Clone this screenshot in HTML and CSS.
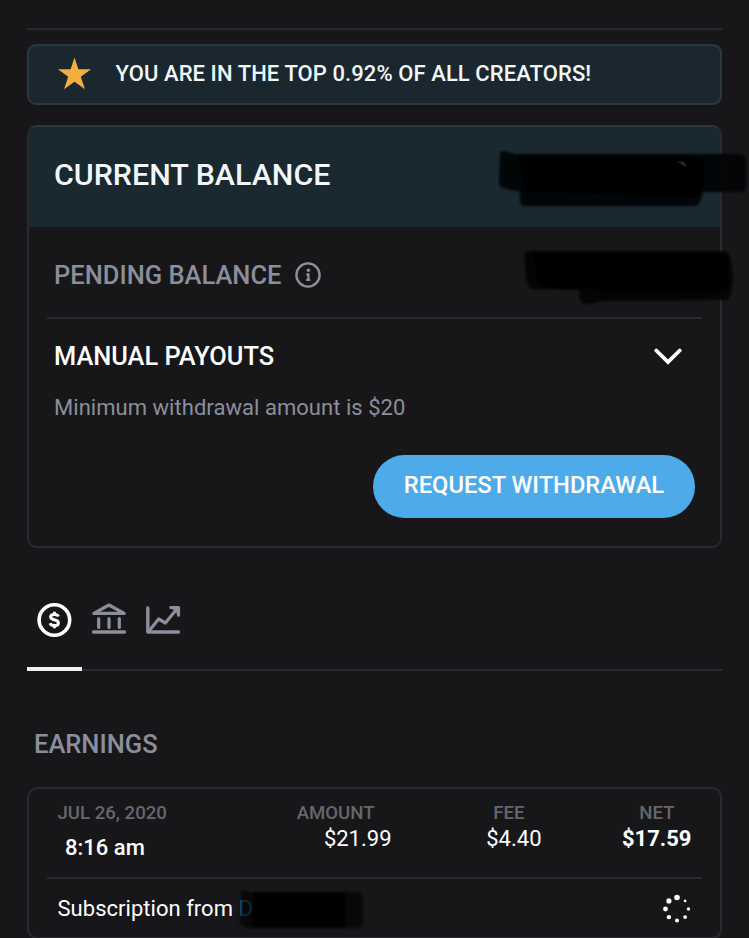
FILE: index.html
```html
<!DOCTYPE html>
<html lang="en">
<head>
    <meta charset="UTF-8">
    <meta name="viewport" content="width=device-width, initial-scale=1.0">
    <title>Earnings</title>
    <link rel="stylesheet" href="styles.css">
</head>
<body>
    <div class="page">
        <div class="banner">
            <svg class="star" viewBox="0 0 34 34" width="34" height="34">
                <path d="M17.500 .5 L21.400 12.300 H34 L23.800 19.800 L28 32.300 L17.500 24.800 L7 32.300 L11.200 19.800 L1 12.300 H13.600 Z" fill="#f3ae3d"/>
            </svg>
            <span class="banner-text">YOU ARE IN THE TOP 0.92% OF ALL CREATORS!</span>
        </div>

        <div class="card balance">
            <div class="current"><span>CURRENT BALANCE</span></div>
            <div class="balance-body">
                <div class="pending">
                    <span>PENDING BALANCE</span>
                    <svg viewBox="0 0 26 26" width="26" height="26" fill="none" stroke="#8a8f9b">
                        <circle cx="13" cy="13" r="11.600" stroke-width="2.400"/>
                        <circle cx="13.400" cy="8.200" r="1.700" fill="#8a8f9b" stroke="none"/>
                        <path d="M11.300 12.300 H13.400 V17.800 M11.200 17.800 H15.200" stroke-width="2.200"/>
                    </svg>
                </div>
                <div class="payouts">
                    <span>MANUAL PAYOUTS</span>
                    <svg viewBox="0 0 28 18" width="28" height="18" fill="none" stroke="#fff">
                        <path d="M2.300 3.500 L14 15 L25.700 3.500" stroke-width="3.800" stroke-linecap="round"/>
                    </svg>
                </div>
                <div class="minimum">Minimum withdrawal amount is $20</div>
                <button class="withdraw"><span>REQUEST WITHDRAWAL</span></button>
            </div>
        </div>

        <div class="tabs">
            <div class="tab active">
                <svg viewBox="0 0 36 36" width="36" height="36" fill="none" stroke="#fff">
                    <circle cx="18.400" cy="18" r="15.300" stroke-width="3.600"/>
                    <path d="M22.400 14.500 C21.700 12.800 20.200 12.400 18.400 12.400 C16 12.400 14.600 13.300 14.600 15 C14.600 18.600 22.400 16.800 22.400 20.900 C22.400 22.700 20.800 23.600 18.400 23.600 C16.400 23.600 14.700 23 14.100 21.300" stroke-width="3"/>
                    <path d="M18.400 9.800 V12.500 M18.400 23.500 V26.200" stroke-width="3"/>
                </svg>
            </div>
            <div class="tab">
                <svg viewBox="0 0 36 36" width="36" height="36" fill="none" stroke="#8a8f9b" stroke-linecap="round" stroke-linejoin="round">
                    <path d="M2.800 11.400 L18 3 L33.200 11.400 Z" stroke-width="3.200"/>
                    <path d="M7.700 16.500 V25.500 M18 16.500 V25.500 M28.300 16.500 V25.500" stroke-width="3.200"/>
                    <path d="M2.500 30 H33.500" stroke-width="3.400"/>
                </svg>
            </div>
            <div class="tab">
                <svg viewBox="0 0 36 36" width="36" height="36" fill="none" stroke="#8a8f9b" stroke-linecap="round" stroke-linejoin="round">
                    <path d="M2.800 6 V30 H33.500" stroke-width="3.400"/>
                    <path d="M4 29 L13.600 17 L20.400 21 L31 8" stroke-width="3.200"/>
                    <path d="M25.800 5.500 H33.500 V13.200" stroke-width="3.200"/>
                    <path d="M26.500 5.500 H33.500 V12.500 Z" fill="#8a8f9b" stroke-width="1"/>
                </svg>
            </div>
        </div>

        <h2 class="title">EARNINGS</h2>

        <div class="card earning">
            <div class="earning-top">
                <div class="col date">
                    <div class="label">JUL 26, 2020</div>
                    <div class="time">8:16 am</div>
                </div>
                <div class="col">
                    <div class="label">AMOUNT</div>
                    <div class="value">$21.99</div>
                </div>
                <div class="col">
                    <div class="label">FEE</div>
                    <div class="value">$4.40</div>
                </div>
                <div class="col">
                    <div class="label">NET</div>
                    <div class="value net">$17.59</div>
                </div>
            </div>
            <div class="earning-bottom">
                <div class="from">Subscription from <span class="user">D</span></div>
                <svg class="spinner" viewBox="0 0 30 30" width="30" height="30" fill="#fff">
                    <circle cx="15" cy="3.500" r="2.800"/>
                    <circle cx="6.900" cy="6.900" r="2.600"/>
                    <circle cx="3.500" cy="15" r="2.400"/>
                    <circle cx="6.900" cy="23.100" r="2.200"/>
                    <circle cx="15" cy="26.500" r="2"/>
                    <circle cx="23.100" cy="23.100" r="1.900"/>
                    <circle cx="26.500" cy="15" r="1.700"/>
                    <circle cx="23.100" cy="6.900" r="1.400"/>
                </svg>
            </div>
        </div>

        <!-- marker strokes over the private values -->
        <svg class="marker" viewBox="0 0 749 938" width="749" height="938">
            <defs>
                <filter id="soft" x="-10%" y="-20%" width="120%" height="140%" color-interpolation-filters="sRGB">
                    <feGaussianBlur stdDeviation="1.300"/>
                </filter>
            </defs>
            <g filter="url(#soft)">
                <path d="M503 151 L516 154 H740 Q746 155 746 161 V186 Q746 192 740 192 H703 L700 202 Q698 206 693 206 H526 Q520 206 520 200 V192 L503 188 Q499 187 499 181 L500 155 Q500 151 503 151 Z" fill="#020406" fill-opacity=".95"/>
                <path d="M518 155 H683 L704 160 V188 L696 198 L524 191 Z"/>
                <path d="M529 251 H724 Q730 252 731 260 L733 280 L730 297 Q729 300 724 300 L602 301 L588 304 Q581 305 580 299 L579 290 L533 289 Q528 288 527 282 L524 256 Q524 252 529 251 Z" fill="#030304" fill-opacity=".93"/>
                <path d="M533 253 H720 Q728 254 728 262 V284 Q728 290 720 290 L620 291 L538 286 Z"/>
                <path d="M241 890 L250 892 H357 Q363 893 363 899 V922 Q363 928 357 928 H248 L240 924 Z" fill="#030304" fill-opacity=".7"/>
                <path d="M254 892 H345 V928 H252 Z" fill-opacity=".95"/>
            </g>
            <path d="M677 161 L684 162 L687 167 L684 166 Z" fill="#22282c"/>
        </svg>
    </div>
</body>
</html>
```
FILE: styles.css
```css
* {
    box-sizing: border-box;
}

body {
    margin: 0;
    height: 938px;
    overflow: hidden;
    background-color: #17171a;
    color: #fff;
    font-family: Roboto, "Liberation Sans", sans-serif;
    font-size: 22px;
}

.page {
    position: relative;
    height: 940px;
    margin-top: 28px;
    margin-left: 27px;
    width: 695px;
    border-top: 2px solid #29292d;
    padding-top: 14px;
}

.banner {
    display: flex;
    align-items: center;
    height: 61px;
    padding: 0 0 3px 28px;
    border: 2px solid #2c3840;
    border-radius: 9px;
    background-color: #1b272f;
}

.star {
    margin-top: 1px;
}

.banner-text {
    margin-left: 24.5px;
    font-weight: 500;
    letter-spacing: 0.08px;
    color: #f2f7fc;
}

.card {
    border: 2px solid #2a2a2f;
    border-radius: 10px;
}

.balance {
    height: 423px;
    margin-top: 20px;
    border-top-color: #2c3840;
    overflow: hidden;
}

.current {
    height: 100px;
    padding: 0 25px 5px;
    line-height: 95px;
    font-size: 30.4px;
    font-weight: 500;
    color: #f2f7fc;
    background-color: #1a2830;
}

.balance-body {
    display: flex;
    flex-direction: column;
    padding: 0 18px;
}

.pending {
    display: flex;
    align-items: center;
    height: 92px;
    padding: 6px 7px 0;
    gap: 13px;
    border-bottom: 2px solid #2a2a2f;
    font-size: 25.5px;
    font-weight: 500;
    color: #8a8f9b;
}

.payouts {
    display: flex;
    align-items: center;
    justify-content: space-between;
    height: 40px;
    margin-top: 17px;
    padding: 0 20px 0 7px;
    font-size: 25.4px;
    font-weight: 500;
}

.minimum {
    margin-top: 16px;
    padding-left: 7px;
    line-height: 31px;
    letter-spacing: 0.04px;
    color: #8a8f9b;
}

.withdraw {
    align-self: flex-end;
    width: 322px;
    height: 63px;
    margin-top: 32px;
    margin-right: 7px;
    padding: 0 0 4px;
    border: none;
    border-radius: 32px;
    background-color: #4eabea;
    color: #fff;
    font-family: inherit;
    font-size: 23.7px;
    font-weight: 500;
}

.tabs {
    display: flex;
    height: 99px;
    margin-top: 24px;
    border-bottom: 2px solid #29292d;
}

.tab {
    display: flex;
    justify-content: center;
    width: 54.5px;
    height: 99px;
    padding-top: 30px;
}

.active {
    border-bottom: 4px solid #f0f0f0;
}

.title {
    margin: 53px 0 0;
    padding-left: 7px;
    line-height: 40px;
    font-size: 25.5px;
    font-weight: 500;
    color: #8a8f9b;
}

.earning {
    height: 152px;
    margin-top: 23px;
    padding: 0 18px;
}

.earning-top {
    display: grid;
    grid-template-columns: 184px 150px 150px 150px;
    height: 90px;
    padding: 12px 0 0 10.5px;
    border-bottom: 2px solid #29292d;
}

.col {
    text-align: right;
}

.date {
    text-align: left;
}

.label {
    padding-right: 17px;
    line-height: 25px;
    font-size: 18.6px;
    font-weight: 500;
    color: #66676d;
}

.value {
    line-height: 26px;
}

.net {
    font-weight: 700;
}

.time {
    padding-left: 7.5px;
    margin-top: 8px;
    line-height: 28px;
    font-weight: 500;
}

.earning-bottom {
    display: flex;
    align-items: center;
    justify-content: space-between;
    height: 58px;
    padding: 1px 10.5px 0;
}

.from {
    padding-bottom: 1px;
    letter-spacing: 0.03px;
}

.user {
    color: #2f7ba5;
}

/* sits over the rows, reaches past the right edge of the cards */
.marker {
    position: absolute;
    top: -30px;
    left: -27px;
}
```
